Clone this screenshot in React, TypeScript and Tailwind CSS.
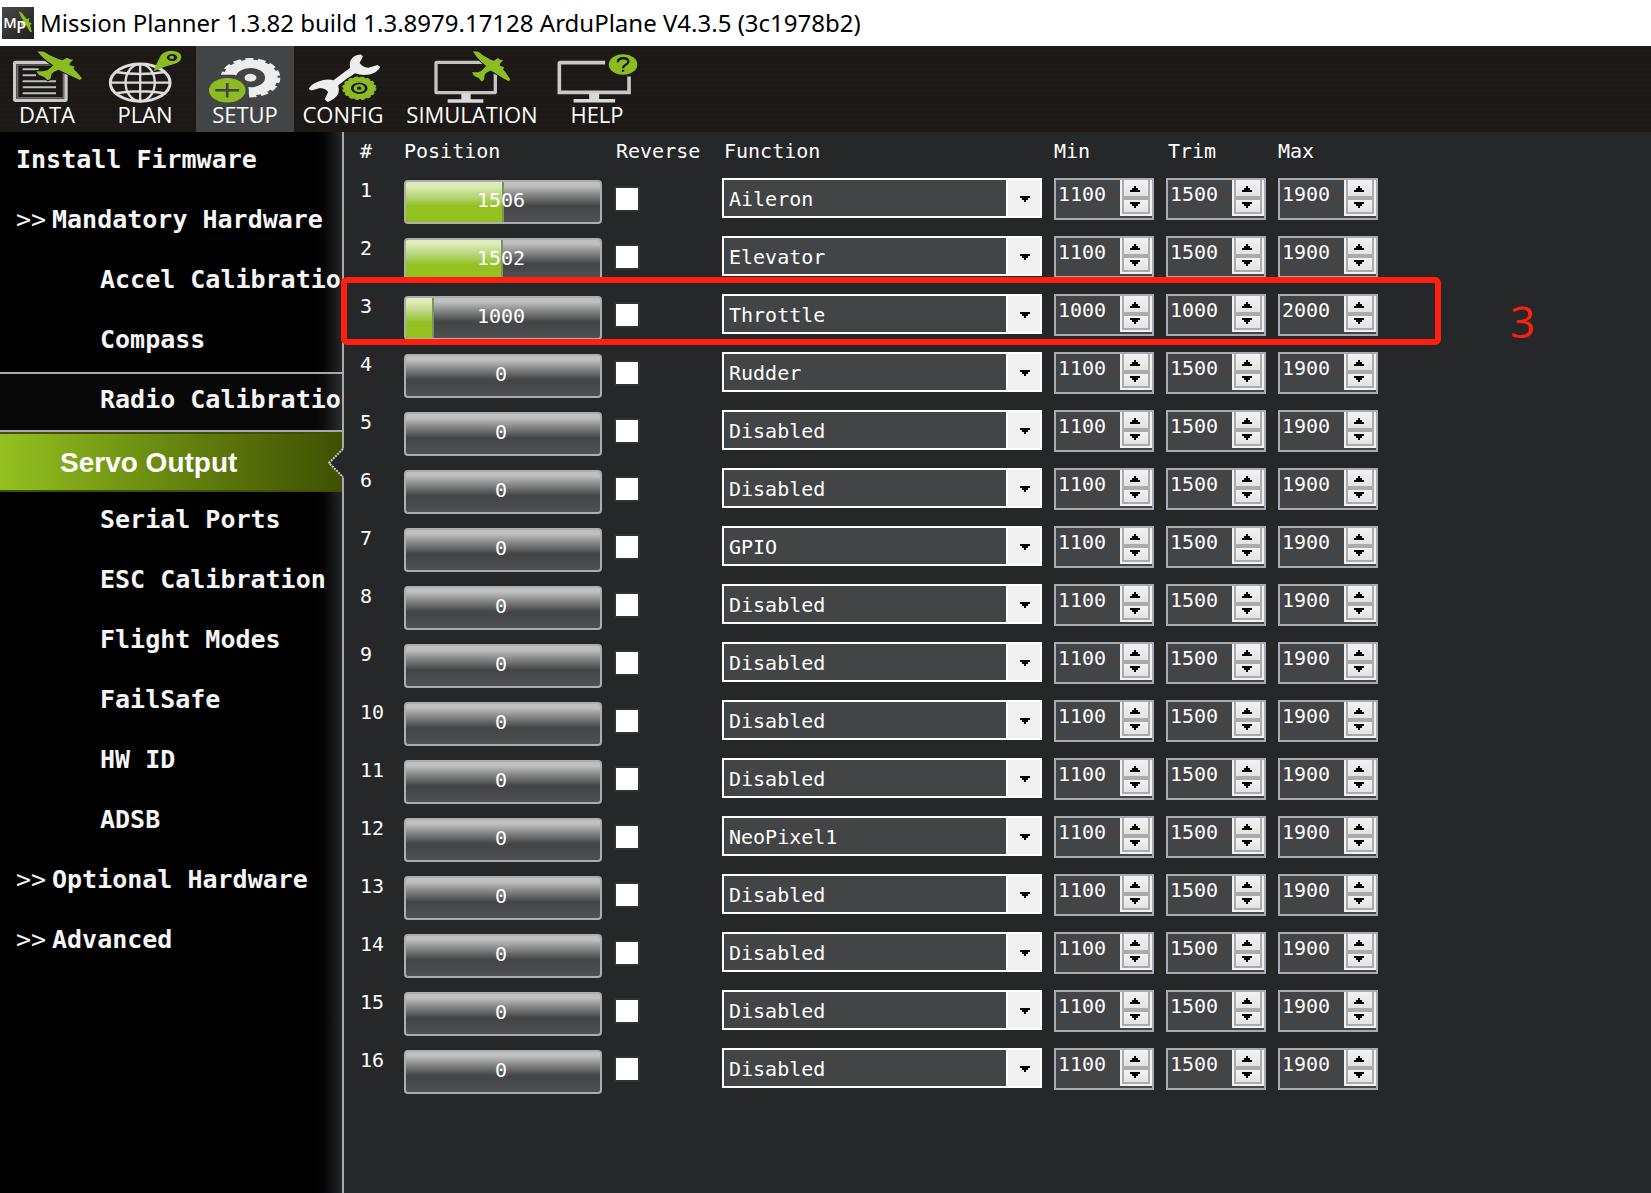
import { useState } from "react"
import { clsx } from "clsx"

const FUNCTIONS = ["Disabled", "Aileron", "Elevator", "Throttle", "Rudder", "GPIO", "NeoPixel1"]

interface Servo {
    id: number
    position: number
    fn: string
    min: number
    trim: number
    max: number
}

const servo = (id: number, position = 0, fn = "Disabled", min = 1100, trim = 1500, max = 1900): Servo => ({
    id, position, fn, min, trim, max
})

const SERVOS: Servo[] = [
    servo(1, 1506, "Aileron"),
    servo(2, 1502, "Elevator"),
    servo(3, 1000, "Throttle", 1000, 1000, 2000),
    servo(4, 0, "Rudder"),
    servo(5),
    servo(6),
    servo(7, 0, "GPIO"),
    servo(8),
    servo(9),
    servo(10),
    servo(11),
    servo(12, 0, "NeoPixel1"),
    servo(13),
    servo(14),
    servo(15),
    servo(16)
]

interface MenuItem {
    label: string
    kind: "top" | "group" | "sub"
    state?: "hover" | "selected"
}

const MENU: MenuItem[] = [
    { label: "Install Firmware", kind: "top" },
    { label: "Mandatory Hardware", kind: "group" },
    { label: "Accel Calibration", kind: "sub" },
    { label: "Compass", kind: "sub" },
    { label: "Radio Calibration", kind: "sub", state: "hover" },
    { label: "Servo Output", kind: "sub", state: "selected" },
    { label: "Serial Ports", kind: "sub" },
    { label: "ESC Calibration", kind: "sub" },
    { label: "Flight Modes", kind: "sub" },
    { label: "FailSafe", kind: "sub" },
    { label: "HW ID", kind: "sub" },
    { label: "ADSB", kind: "sub" },
    { label: "Optional Hardware", kind: "group" },
    { label: "Advanced", kind: "group" }
]

const PLANE =
    "M116 152 L136 153 L152 163 L180 176 L192 179 L205 171 L214 176 L224 177 L214 187 L212 193 L228 198 L224 204 L234 214 L250 233 L244 238 L226 230 L198 216 L180 207 L166 213 L159 219 L155 235 L147 239 L137 229 L121 223 L113 212 L134 212 L146 209 L156 201 L164 194 L146 182 L128 166 Z"

function DataIcon() {
    return (
        <svg viewBox="34 145 225 165" width="75" height="55" aria-hidden="true">
            <rect x="48" y="185" width="154" height="114" rx="3" fill="none" stroke="#c9c9c9" strokeWidth="10" />
            <rect x="57" y="193" width="137" height="98" fill="none" stroke="#6f6d6b" strokeWidth="4" />
            <path d="M72 206 H120 M72 224 H112 M72 242 H172 M72 260 H172 M72 278 H172" fill="none" stroke="#bdbdbd" strokeWidth="6" />
            <path d={PLANE} fill="#8dbb22" stroke="#1b1815" strokeWidth="6" paintOrder="stroke" />
        </svg>
    )
}

function PlanIcon() {
    return (
        <svg viewBox="325 145 235 165" width="78" height="55" aria-hidden="true">
            <g fill="none" stroke="#dcdcdc" strokeWidth="7">
                <ellipse cx="428" cy="246" rx="90" ry="56" strokeWidth="9" />
                <ellipse cx="428" cy="246" rx="44" ry="56" />
                <path d="M428 190 V302 M338 246 H518 M354 214 Q428 226 502 214 M354 278 Q428 266 502 278" />
            </g>
            <path fillRule="evenodd" d="M468 212 Q478 186 490 164 Q502 150 524 150 Q552 152 552 170 Q550 186 522 192 Q496 198 468 212 Z M524 160 A15 10 0 1 0 524 181 A15 10 0 1 0 524 160 Z" fill="#8dbb22" />
            <ellipse cx="523" cy="170" rx="7" ry="5" fill="#8dbb22" />
        </svg>
    )
}

function SetupIcon() {
    return (
        <svg viewBox="615 160 235 150" width="78" height="50" aria-hidden="true">
            <g transform="translate(749 231) scale(1 .66)" fill="none" stroke="#ededed">
                <circle r="63" strokeWidth="38" />
                <circle r="84" strokeWidth="12" strokeDasharray="24 14" />
                <circle r="18" fill="#ededed" stroke="none" />
            </g>
            <path d="M615 222 H700 Q730 230 741 256 L748 310 H615 Z" fill="#434445" />
            <ellipse cx="679" cy="269" rx="65" ry="46" fill="#434445" />
            <ellipse cx="679" cy="269" rx="55" ry="37" fill="#8dbb22" />
            <path d="M679 247 V291 M643 269 H715" stroke="#434445" strokeWidth="8" />
        </svg>
    )
}

function ConfigIcon() {
    return (
        <svg viewBox="15 35 230 155" width="77" height="52" aria-hidden="true">
            <path d="M182 42 Q160 42 151 60 Q146 72 150 82 L100 119 Q78 114 55 123 Q32 132 26 145 L34 150 L60 142 Q78 144 84 154 L74 176 L82 184 Q106 176 115 158 Q118 146 114 134 L164 98 Q184 106 208 102 Q232 96 240 80 L232 74 L204 82 Q186 80 178 68 L188 48 Z" fill="#ededed" />
            <ellipse cx="177" cy="143" rx="55" ry="38" fill="#1b1815" />
            <g transform="translate(177 143) scale(1 .69)" fill="none" stroke="#8dbb22">
                <circle r="36" strokeWidth="22" />
                <circle r="48" strokeWidth="6" strokeDasharray="12 7" />
                <circle r="12" strokeWidth="10" />
            </g>
        </svg>
    )
}

function SimulationIcon() {
    return (
        <svg viewBox="398 28 240 162" width="80" height="54" aria-hidden="true">
            <rect x="410" y="65" width="178" height="91" rx="3" fill="none" stroke="#c4c4c4" strokeWidth="10" />
            <path d="M486 158 H514 V176 H552 V186 H445 V176 H486 Z" fill="#d9d9d9" />
            <path d={PLANE} transform="translate(423 -126) scale(.84 1.04)" fill="#8dbb22" stroke="#1b1815" strokeWidth="6" paintOrder="stroke" />
        </svg>
    )
}

function HelpIcon() {
    return (
        <svg viewBox="770 35 250 155" width="83" height="52" aria-hidden="true">
            <path d="M918 66 H784 Q780 66 780 70 V156 H990 V108" fill="none" stroke="#c9c9c9" strokeWidth="11" />
            <path d="M870 158 H900 V176 H948 V186 H823 V176 H870 Z" fill="#d9d9d9" />
            <ellipse cx="972" cy="72" rx="43" ry="31" fill="#8dbb22" />
            <path d="M956 65 Q957 53 972 53 Q988 53 988 64 Q987 70 978 74 Q972 77 972 83 M972 88 V94" fill="none" stroke="#1b1815" strokeWidth="7" />
        </svg>
    )
}

const NAV = [
    { label: "DATA", icon: DataIcon, width: "w-[94px]" },
    { label: "PLAN", icon: PlanIcon, width: "w-[102px]" },
    { label: "SETUP", icon: SetupIcon, width: "w-[98px]", active: true },
    { label: "CONFIG", icon: ConfigIcon, width: "w-[98px]" },
    { label: "SIMULATION", icon: SimulationIcon, width: "w-[160px]" },
    { label: "HELP", icon: HelpIcon, width: "w-[90px]" }
]

function AppLogo() {
    return (
        <svg viewBox="0 0 96 96" width="32" height="32" aria-hidden="true">
            <defs>
                <linearGradient id="logo-bg" x1="0" y1="0" x2="1" y2="1">
                    <stop offset="0" stopColor="#4a4a4a" />
                    <stop offset="1" stopColor="#1e1e1e" />
                </linearGradient>
            </defs>
            <rect width="96" height="96" fill="url(#logo-bg)" />
            <path d="M50 12 L60 18 L74 36 L82 33 L80 44 L90 50 L84 54 L90 76 L84 74 L72 54 L64 54 L60 62 L56 50 L66 44 L56 28 Z" fill="#8dbb22" />
            <text x="4" y="62" fontSize="44" fontWeight="600" fill="#fff" fontFamily="Open Sans, sans-serif">M</text>
            <text x="43" y="78" fontSize="48" fontWeight="600" fill="#fff" fontFamily="Open Sans, sans-serif">P</text>
        </svg>
    )
}

function Triangle({ up = false }: { up?: boolean }) {
    return (
        <svg width="10" height="6" viewBox="0 0 10 6" shapeRendering="crispEdges" aria-hidden="true">
            <path d={up ? "M4 0h2v2h2v2h2v2H0V4h2V2h2z" : "M0 0h10v2H8v2H6v2H4V4H2V2H0z"} fill="#000" />
        </svg>
    )
}

function SideItem({ item }: { item: MenuItem }) {
    if (item.state === "selected") {
        return (
            <a
                href="#"
                aria-current="page"
                className="relative flex h-[60px] items-center border-y-2 border-[#3f5003] bg-linear-to-r from-[#94c11f] to-[#3f5003] pt-[2px] pl-[60px] font-['Liberation_Sans',sans-serif] text-[28px] font-bold text-white"
            >
                {item.label}
                <svg className="absolute top-[14px] right-[-2px]" width="16" height="30" viewBox="0 0 16 30" aria-hidden="true">
                    <path d="M16 0 L1 15 L16 30 Z" fill="#262729" />
                    <path d="M15 1 L1 15 L15 29" fill="none" stroke="#c8c8c8" strokeWidth="2" strokeDasharray="2 1" />
                </svg>
            </a>
        )
    }

    return (
        <a
            href="#"
            className={clsx(
                "flex h-[60px] items-center overflow-hidden pb-1 text-[25px] font-bold whitespace-nowrap text-[#f5f5f5]",
                item.kind === "sub" ? "pl-[100px]" : "pl-4",
                item.state === "hover" && "border-y-2 border-[#a9a9a9] bg-white/[0.03]"
            )}
        >
            {item.kind === "group" && <span className="w-9 shrink-0 font-normal">&gt;&gt;</span>}
            {item.label}
        </a>
    )
}

function PositionBar({ value }: { value: number }) {
    // PWM range shown by the bar is 800 - 2200
    const percent = Math.max(0, ((value - 800) / 1400) * 100)

    return (
        <div
            role="progressbar"
            aria-valuenow={value}
            className="relative mt-[2px] h-[44px] w-[198px] overflow-hidden rounded-[4px] border-2 border-[#adadad] bg-linear-to-b from-[#c0c0c0] from-10% via-[#434445] via-60% to-[#505152]"
        >
            {percent > 0 && (
                <div
                    className="h-full border-r-2 border-[#7f9160] bg-linear-to-b from-[#dfebba] from-10% to-[#94c11f] to-60%"
                    style={{ width: `${percent}%` }}
                />
            )}
            <span className="absolute inset-0 flex items-center justify-center pr-1 pb-1">{value}</span>
        </div>
    )
}

function NumberBox({ value, label }: { value: number; label: string }) {
    const [current, setCurrent] = useState(value)

    return (
        <div className="flex h-[42px] w-[100px] border-2 border-[#a9aab2] bg-[#434445]">
            <input
                type="text"
                aria-label={label}
                value={current}
                onChange={e => setCurrent(Number(e.target.value) || 0)}
                className="h-7 w-16 bg-transparent pl-[2px] leading-6 text-white outline-none"
            />
            <div className="h-9 w-8 bg-[#f2f2f2] px-[2px] pb-[2px]">
                <div className="flex h-full flex-col border-x-2 border-b-2 border-[#ababab]">
                    <button
                        aria-label={`Increase ${label}`}
                        onClick={() => setCurrent(current + 1)}
                        className="flex h-4 items-center justify-center bg-linear-to-b from-[#f2f2f2] to-[#e4e4e4] pt-[2px] pr-[2px]"
                    >
                        <Triangle up />
                    </button>
                    <button
                        aria-label={`Decrease ${label}`}
                        onClick={() => setCurrent(current - 1)}
                        className="flex grow justify-center border-t-4 border-[#ababab] bg-linear-to-b from-[#f2f2f2] to-[#e4e4e4] pt-[2px] pr-[2px]"
                    >
                        <Triangle />
                    </button>
                </div>
            </div>
        </div>
    )
}

function ServoRow({ servo }: { servo: Servo }) {
    return (
        <tr className="h-[58px] align-top">
            <td className="pl-4 leading-6">{servo.id}</td>
            <td>
                <PositionBar value={servo.position} />
            </td>
            <td>
                <input
                    type="checkbox"
                    aria-label={`Reverse servo ${servo.id}`}
                    className="mt-2 block size-[26px] appearance-none border-2 border-[#303133] bg-white checked:bg-[#94c11f]"
                />
            </td>
            <td>
                <div className="relative w-[320px]">
                    <select
                        aria-label={`Function of servo ${servo.id}`}
                        defaultValue={servo.fn}
                        className="block h-10 w-full appearance-none border-2 border-white bg-[#434445] pt-[2px] pl-[5px] text-white"
                    >
                        {FUNCTIONS.map(fn => (
                            <option key={fn}>{fn}</option>
                        ))}
                    </select>
                    <span className="pointer-events-none absolute inset-y-0 right-0 flex w-9 items-center justify-center border-2 border-white bg-[#f0f0f0] pt-[2px] pl-[2px]">
                        <Triangle />
                    </span>
                </div>
            </td>
            <td><NumberBox value={servo.min} label={`minimum ${servo.id}`} /></td>
            <td><NumberBox value={servo.trim} label={`trim ${servo.id}`} /></td>
            <td><NumberBox value={servo.max} label={`maximum ${servo.id}`} /></td>
        </tr>
    )
}

export default function App() {
    return (
        <div className="flex min-h-screen flex-col bg-[#262729] font-['DejaVu_Sans_Mono',monospace] text-[20px] text-white">
            {/* Title bar */}
            <header className="flex h-[46px] items-center gap-[6px] bg-white pl-[2px] font-['Noto_Sans',sans-serif] text-2xl whitespace-nowrap text-black">
                <AppLogo />
                <h1>Mission Planner 1.3.82 build 1.3.8979.17128 ArduPlane V4.3.5 (3c1978b2)</h1>
            </header>

            {/* Toolbar */}
            <nav className="flex h-[86px] bg-[repeating-linear-gradient(to_bottom,#1b1815_0px,#1b1815_3px,#1d1a17_3px,#1d1a17_5px)] font-['Open_Sans',sans-serif] text-[22px]">
                {NAV.map(({ label, icon: Icon, width, active }) => (
                    <button
                        key={label}
                        className={clsx("flex flex-col items-center", width, active && "bg-[#434445]")}
                    >
                        <span className="flex h-[60px] items-end pb-[2px]"><Icon /></span>
                        <span className="leading-4">{label}</span>
                    </button>
                ))}
            </nav>

            <div className="flex grow">
                {/* Side menu */}
                <aside className="w-[344px] shrink-0 border-r-2 border-[#a9a9a9] bg-linear-to-r from-black from-90% to-[#262729]">
                    {MENU.map(item => (
                        <SideItem key={item.label} item={item} />
                    ))}
                </aside>

                <main className="relative grow">
                    <table className="w-[1046px] table-fixed text-left">
                        <thead>
                            <tr className="h-[46px] align-top leading-[38px]">
                                <th className="w-[60px] pl-4 font-normal">#</th>
                                <th className="w-[210px] font-normal">Position</th>
                                <th className="w-[108px] pl-[2px] font-normal">Reverse</th>
                                <th className="w-[332px] pl-[2px] font-normal">Function</th>
                                <th className="w-[112px] font-normal">Min</th>
                                <th className="w-[112px] pl-[2px] font-normal">Trim</th>
                                <th className="w-[112px] font-normal">Max</th>
                            </tr>
                        </thead>
                        <tbody>
                            {SERVOS.map(s => (
                                <ServoRow key={s.id} servo={s} />
                            ))}
                        </tbody>
                    </table>

                    {/* Throttle row callout */}
                    <div className="pointer-events-none absolute top-[145px] left-[-3px] h-[68px] w-[1100px] rounded-[6px] border-6 border-[#ff1f10]" />
                    <span className="absolute top-[169px] left-[1166px] font-['Open_Sans',sans-serif] text-[44px] leading-10 text-[#ff1f10]">3</span>
                </main>
            </div>
        </div>
    )
}
